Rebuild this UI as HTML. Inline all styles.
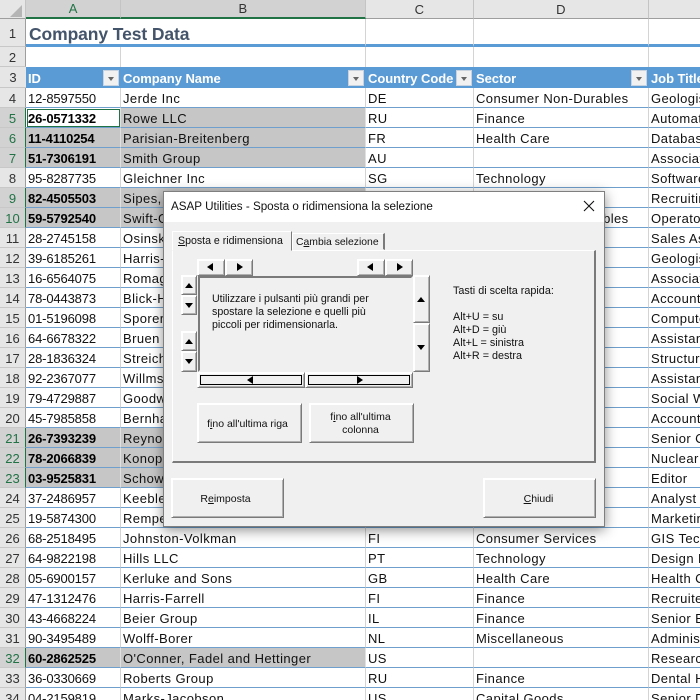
<!DOCTYPE html>
<html><head><meta charset="utf-8">
<style>
html,body{margin:0;padding:0;background:#fff}
#w{position:relative;width:700px;height:700px;overflow:hidden;font-family:"Liberation Sans",sans-serif}
table{position:absolute;left:0;top:0;border-collapse:separate;border-spacing:0;table-layout:fixed;width:709px}
td{box-sizing:border-box;height:20px;padding:1px 0 0 2px;font-size:13px;letter-spacing:.42px;white-space:nowrap;overflow:hidden;border-right:1px solid #d4d4d4;border-bottom:1px solid #6f9fcc;color:#111}
td:first-child{padding:1px 0 0;text-align:center;background:#e6e6e6;border-right:1px solid #9e9e9e;border-bottom:1px solid #c8c8c8;color:#333;letter-spacing:0}
td:nth-child(2){letter-spacing:-.15px}
tr.s td:first-child{background:#d2d2d2;color:#217346;border-right:1px solid #217346}
tr.s td:nth-child(2),tr.s td:nth-child(3){background:#c6c6c6;border-right-color:#e0e0e0}
tr.s td:nth-child(2){font-weight:bold;color:#000}
tr.h td{height:19px;background:#e6e6e6;text-align:center;color:#333;border-bottom:1px solid #9e9e9e;border-right:1px solid #c4c4c4;padding:0}
tr.t td{height:28px;border-bottom:3px solid #5b9bd5}
tr.u td{height:20px;border-bottom:0}
tr.v td{height:21px;background:#5b9bd5;color:#fff;font-weight:bold;border-right:0;border-bottom:0;letter-spacing:-.05px}
tr.v td:first-child,tr.u td:first-child,tr.t td:first-child{background:#e6e6e6;color:#333;font-weight:normal;border-bottom:1px solid #c8c8c8}
.f{position:absolute;top:70px;width:16px;height:16px;box-sizing:border-box;background:#f1f1f1;border:1px solid #c9d3df}
.f:after{content:"";position:absolute;left:3.5px;top:6px;border:3.5px solid transparent;border-top:4px solid #666;border-bottom:0}
.c{position:absolute;top:0;left:0;width:0;height:0;border-style:solid;border-width:0 0 12px 12px;border-color:transparent transparent #b5b5b5 transparent;margin:5px 0 0 10px}
.d,.d div{position:absolute;box-sizing:border-box}
.d{left:163px;top:191px;width:442px;height:336px;background:#f0f0f0;border:1px solid #7f7f7f;box-shadow:0 3px 12px rgba(0,0,0,.45);color:#111;font-size:10.65px;letter-spacing:0}
.tb{left:0;top:0;width:440px;height:30px;background:#fff;font-size:11.65px;line-height:30px;padding-left:7px;color:#111}
.b{background:#f0f0f0;border:1px solid;border-color:#fff #7a7a7a #7a7a7a #fff;box-shadow:inset 1px 1px 0 #fff,inset -1px -1px 0 #b0b0b0;text-align:center}
.l{width:0;height:0;border-style:solid;border-color:transparent}
.tl{border-width:4px 6px 4px 0;border-right-color:#000}
.tr{border-width:4px 0 4px 6px;border-left-color:#000}
.tu{border-width:0 4.5px 5px;border-bottom-color:#000}
.td{border-width:5px 4.5px 0;border-top-color:#000}
.tx{white-space:nowrap}
.bi{color:#111;font-size:10.5px}
</style></head><body>
<div id="w">
<table>
<colgroup><col style="width:26px"><col style="width:95px"><col style="width:245px"><col style="width:108px"><col style="width:175px"><col style="width:60px"></colgroup>
<tr class="h"><td></td><td style="background:#d2d2d2;color:#217346;border-bottom:2px solid #217346">A</td><td style="background:#d2d2d2;border-bottom:2px solid #217346">B</td><td>C</td><td>D</td><td></td></tr>
<tr class="t"><td>1</td><td colspan="2"></td><td></td><td></td><td></td></tr>
<tr class="u"><td>2</td><td></td><td></td><td></td><td></td><td></td></tr>
<tr class="v"><td>3</td><td>ID</td><td>Company Name</td><td>Country Code</td><td>Sector</td><td>Job Title</td></tr>
<tr><td>4</td><td>12-8597550</td><td>Jerde Inc</td><td>DE</td><td>Consumer Non-Durables</td><td>Geologist</td></tr>
<tr class="s"><td>5</td><td style="background:#fff">26-0571332</td><td>Rowe LLC</td><td>RU</td><td>Finance</td><td>Automation</td></tr>
<tr class="s"><td>6</td><td>11-4110254</td><td>Parisian-Breitenberg</td><td>FR</td><td>Health Care</td><td>Database</td></tr>
<tr class="s"><td>7</td><td>51-7306191</td><td>Smith Group</td><td>AU</td><td></td><td>Associate</td></tr>
<tr><td>8</td><td>95-8287735</td><td>Gleichner Inc</td><td>SG</td><td>Technology</td><td>Software</td></tr>
<tr class="s"><td>9</td><td>82-4505503</td><td>Sipes, Inc</td><td></td><td></td><td>Recruiting</td></tr>
<tr class="s"><td>10</td><td>59-5792540</td><td>Swift-Group</td><td></td><td>Consumer Non-Durables</td><td>Operator</td></tr>
<tr><td>11</td><td>28-2745158</td><td>Osinski</td><td></td><td></td><td>Sales Assoc</td></tr>
<tr><td>12</td><td>39-6185261</td><td>Harris-Lang</td><td></td><td></td><td>Geologist</td></tr>
<tr><td>13</td><td>16-6564075</td><td>Romaguera</td><td></td><td></td><td>Associate</td></tr>
<tr><td>14</td><td>78-0443873</td><td>Blick-Hane</td><td></td><td></td><td>Accountant</td></tr>
<tr><td>15</td><td>01-5196098</td><td>Sporer Inc</td><td></td><td></td><td>Computer</td></tr>
<tr><td>16</td><td>64-6678322</td><td>Bruen Inc</td><td></td><td></td><td>Assistant</td></tr>
<tr><td>17</td><td>28-1836324</td><td>Streich Inc</td><td></td><td></td><td>Structural</td></tr>
<tr><td>18</td><td>92-2367077</td><td>Willms Inc</td><td></td><td></td><td>Assistant</td></tr>
<tr><td>19</td><td>79-4729887</td><td>Goodwin</td><td></td><td></td><td>Social Work</td></tr>
<tr><td>20</td><td>45-7985858</td><td>Bernhard</td><td></td><td></td><td>Accountant</td></tr>
<tr class="s"><td>21</td><td>26-7393239</td><td>Reynolds</td><td></td><td></td><td>Senior Cost</td></tr>
<tr class="s"><td>22</td><td>78-2066839</td><td>Konopelski</td><td></td><td></td><td>Nuclear</td></tr>
<tr class="s"><td>23</td><td>03-9525831</td><td>Schowalter</td><td></td><td></td><td>Editor</td></tr>
<tr><td>24</td><td>37-2486957</td><td>Keebler</td><td></td><td></td><td>Analyst Pro</td></tr>
<tr><td>25</td><td>19-5874300</td><td>Rempel</td><td></td><td></td><td>Marketing</td></tr>
<tr><td>26</td><td>68-2518495</td><td>Johnston-Volkman</td><td>FI</td><td>Consumer Services</td><td>GIS Techn</td></tr>
<tr><td>27</td><td>64-9822198</td><td>Hills LLC</td><td>PT</td><td>Technology</td><td>Design En</td></tr>
<tr><td>28</td><td>05-6900157</td><td>Kerluke and Sons</td><td>GB</td><td>Health Care</td><td>Health Coa</td></tr>
<tr><td>29</td><td>47-1312476</td><td>Harris-Farrell</td><td>FI</td><td>Finance</td><td>Recruiter</td></tr>
<tr><td>30</td><td>43-4668224</td><td>Beier Group</td><td>IL</td><td>Finance</td><td>Senior Ed</td></tr>
<tr><td>31</td><td>90-3495489</td><td>Wolff-Borer</td><td>NL</td><td>Miscellaneous</td><td>Administr</td></tr>
<tr class="s"><td>32</td><td>60-2862525</td><td>O'Conner, Fadel and Hettinger</td><td>US</td><td></td><td>Research</td></tr>
<tr><td>33</td><td>36-0330669</td><td>Roberts Group</td><td>RU</td><td>Finance</td><td>Dental Hy</td></tr>
<tr><td>34</td><td>04-2159819</td><td>Marks-Jacobson</td><td>US</td><td>Capital Goods</td><td>Senior De</td></tr>
</table>
<div style="position:absolute;left:29px;top:24px;font-size:17.5px;line-height:20px;font-weight:bold;color:#44546a;letter-spacing:-.1px;white-space:nowrap">Company Test Data</div>
<div class="c"></div>
<div style="position:absolute;left:27px;top:109px;width:93px;height:18px;box-sizing:border-box;border:1px solid #217346"></div>
<div class="f" style="left:103px"></div><div class="f" style="left:348px"></div><div class="f" style="left:456px"></div><div class="f" style="left:631px"></div>

<div class="d">
<div class="tb">ASAP Utilities - Sposta o ridimensiona la selezione</div>
<svg style="position:absolute;left:419px;top:8px" width="12" height="12"><path d="M1 1L11 11M11 1L1 11" stroke="#111" stroke-width="1.1" fill="none"/></svg>

<div style="left:8px;top:58px;width:424px;height:213px;border:1px solid;border-color:#fff #7a7a7a #7a7a7a #fff;border-width:1px 2px 2px 1px;background:#f0f0f0"></div>
<div class="tx" style="left:128px;top:41px;width:93px;height:17px;background:#f0f0f0;border:1px solid;border-color:#fff #7a7a7a transparent #fff;border-right-width:2px;line-height:17px;padding-left:3px;font-size:10.4px">C<u>a</u>mbia selezione</div>
<div class="tx" style="left:8px;top:39px;width:120px;height:20px;background:#f0f0f0;border:1px solid;border-color:#fff #7a7a7a #f0f0f0 #fff;line-height:18px;padding-left:5px;font-size:10.6px"><u>S</u>posta e ridimensiona</div>

<!-- top nudges -->
<div class="b" style="left:33px;top:67px;width:28px;height:17px"><div class="l tl" style="left:9px;top:3px"></div></div>
<div class="b" style="left:61px;top:67px;width:28px;height:17px"><div class="l tr" style="left:11px;top:3px"></div></div>
<div class="b" style="left:193px;top:67px;width:28px;height:17px"><div class="l tl" style="left:9px;top:3px"></div></div>
<div class="b" style="left:221px;top:67px;width:28px;height:17px"><div class="l tr" style="left:11px;top:3px"></div></div>
<!-- left nudges -->
<div class="b" style="left:17px;top:83px;width:16px;height:20px"><div class="l tu" style="left:3px;top:7px"></div></div>
<div class="b" style="left:17px;top:103px;width:16px;height:20px"><div class="l td" style="left:3px;top:7px"></div></div>
<div class="b" style="left:17px;top:139px;width:16px;height:20px"><div class="l tu" style="left:3px;top:7px"></div></div>
<div class="b" style="left:17px;top:159px;width:16px;height:21px"><div class="l td" style="left:3px;top:7px"></div></div>
<!-- centre panel -->
<div style="left:34px;top:84px;width:215px;height:96px;border:2px solid;border-color:#7a7a7a #f0f0f0 #f0f0f0 #7a7a7a;background:#f0f0f0"></div>
<div class="tx" style="left:48px;top:101px;line-height:13px;color:#111">Utilizzare i pulsanti più grandi per<br>spostare la selezione e quelli più<br>piccoli per ridimensionarla.</div>
<!-- right big -->
<div class="b" style="left:249px;top:83px;width:17px;height:48px"><div class="l tu" style="left:3px;top:21px"></div></div>
<div class="b" style="left:249px;top:131px;width:17px;height:49px"><div class="l td" style="left:3px;top:21px"></div></div>
<!-- bottom -->
<div class="b" style="left:33px;top:180px;width:108px;height:16px"><div style="left:2px;top:2px;width:102px;height:10px;border:1px solid #000"></div><div class="l tl" style="left:49px;top:3px"></div></div>
<div class="b" style="left:141px;top:180px;width:108px;height:16px"><div style="left:2px;top:2px;width:102px;height:10px;border:1px solid #000"></div><div class="l tr" style="left:51px;top:3px"></div></div>

<div class="tx" style="left:289px;top:93px;line-height:13px;font-size:10.8px">Tasti di scelta rapida:<br><br>Alt+U = su<br>Alt+D = giù<br>Alt+L = sinistra<br>Alt+R = destra</div>

<div class="b bi" style="left:33px;top:211px;width:105px;height:40px;line-height:40px;padding-right:4px">f<u>i</u>no all'ultima riga</div>
<div class="b bi" style="left:145px;top:211px;width:105px;height:40px;line-height:13px;padding:7px 2px 0 0">f<u>i</u>no all'ultima<br>colonna</div>
<div class="b bi" style="left:7px;top:286px;width:113px;height:40px;line-height:40px;padding-right:4px">R<u>e</u>imposta</div>
<div class="b bi" style="left:319px;top:286px;width:113px;height:40px;line-height:40px;padding-right:2px"><u>C</u>hiudi</div>
</div>
</div>
</body></html>
